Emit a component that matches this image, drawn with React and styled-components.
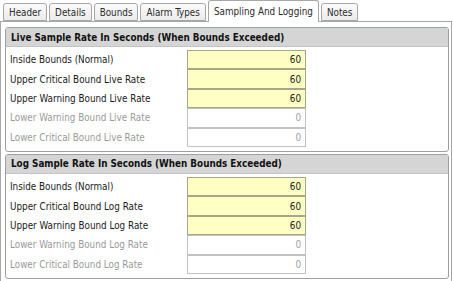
import React from "react";
import styled, { createGlobalStyle } from "styled-components";

const Global = createGlobalStyle`
  html, body { margin: 0; padding: 0; background: #ffffff; }
  body { font-family: Tahoma, "DejaVu Sans", Verdana, sans-serif; }
`;

const Root = styled.div`
  width: 453px;
  height: 281px;
  overflow: hidden;
  background: #ffffff;
  font-family: "DejaVu Sans Condensed", "DejaVu Sans", Verdana, sans-serif;
  font-stretch: condensed;
  font-size: 9.8px;
`;

const TabStrip = styled.div`
  display: flex;
  align-items: flex-end;
  gap: 2px;
  height: 21px;
  padding-left: 3px;
  position: relative;
  z-index: 2;
`;

const Tab = styled.div`
  box-sizing: border-box;
  height: ${(p) => (p.$active ? "22px" : "18px")};
  margin-bottom: ${(p) => (p.$active ? "-1px" : "0")};
  padding: 0 5px;
  display: flex;
  align-items: center;
  border: 1px solid #a7a7a7;
  border-bottom: ${(p) => (p.$active ? "none" : "1px solid #a7a7a7")};
  border-radius: 3px 3px 0 0;
  background: ${(p) =>
    p.$active ? "#ffffff" : "linear-gradient(#fbfbfb, #ebebeb)"};
  color: #2b2b2b;
  white-space: nowrap;
  padding-top: ${(p) => (p.$active ? "0" : "1px")};
`;

const Panel = styled.div`
  box-sizing: border-box;
  width: 452px;
  height: 260px;
  border: 1px solid #a7a7a7;
  border-bottom: none;
  padding: 5px 2px 0 4px;
  display: flex;
  flex-direction: column;
  gap: 2px;
`;

const Group = styled.div`
  border: 1px solid #9ca0a5;
  border-radius: 3px;
  overflow: hidden;
  padding-bottom: 4px;
`;

const GroupHeader = styled.div`
  height: 18px;
  display: flex;
  align-items: center;
  padding-left: 5px;
  background: #d5d5d5;
  border-bottom: 1px solid #c4c4c4;
  font-weight: bold;
  color: #111111;
`;

const Rows = styled.div`
  padding-top: 3px;
  display: flex;
  flex-direction: column;
`;

const Row = styled.div`
  display: flex;
  align-items: center;
  height: 19.4px;
`;

const Label = styled.div`
  width: 181px;
  padding-left: 4px;
  box-sizing: border-box;
  color: ${(p) => (p.$disabled ? "#9a9a9a" : "#1a1a1a")};
`;

const Value = styled.div`
  box-sizing: border-box;
  width: 119px;
  height: 19.4px;
  display: flex;
  align-items: center;
  justify-content: flex-end;
  padding-right: 4px;
  background: ${(p) => (p.$disabled ? "#ffffff" : "#ffffc4")};
  border: 1px solid ${(p) => (p.$disabled ? "#c2c2c2" : "#a6a68a")};
  color: ${(p) => (p.$disabled ? "#a0a0a0" : "#1a1a1a")};
`;

const tabs = ["Header", "Details", "Bounds", "Alarm Types", "Sampling And Logging", "Notes"];

const groups = [
  {
    title: "Live Sample Rate In Seconds (When Bounds Exceeded)",
    rows: [
      ["Inside Bounds (Normal)", "60", false],
      ["Upper Critical Bound Live Rate", "60", false],
      ["Upper Warning Bound Live Rate", "60", false],
      ["Lower Warning Bound Live Rate", "0", true],
      ["Lower Critical Bound Live Rate", "0", true],
    ],
  },
  {
    title: "Log Sample Rate In Seconds (When Bounds Exceeded)",
    rows: [
      ["Inside Bounds (Normal)", "60", false],
      ["Upper Critical Bound Log Rate", "60", false],
      ["Upper Warning Bound Log Rate", "60", false],
      ["Lower Warning Bound Log Rate", "0", true],
      ["Lower Critical Bound Log Rate", "0", true],
    ],
  },
];

export default function App() {
  return (
    <Root>
      <Global />
      <TabStrip>
        {tabs.map((t) => (
          <Tab key={t} $active={t === "Sampling And Logging"}>
            {t}
          </Tab>
        ))}
      </TabStrip>
      <Panel>
        {groups.map((g) => (
          <Group key={g.title}>
            <GroupHeader>{g.title}</GroupHeader>
            <Rows>
              {g.rows.map(([label, value, disabled]) => (
                <Row key={label}>
                  <Label $disabled={disabled}>{label}</Label>
                  <Value $disabled={disabled}>{value}</Value>
                </Row>
              ))}
            </Rows>
          </Group>
        ))}
      </Panel>
    </Root>
  );
}
